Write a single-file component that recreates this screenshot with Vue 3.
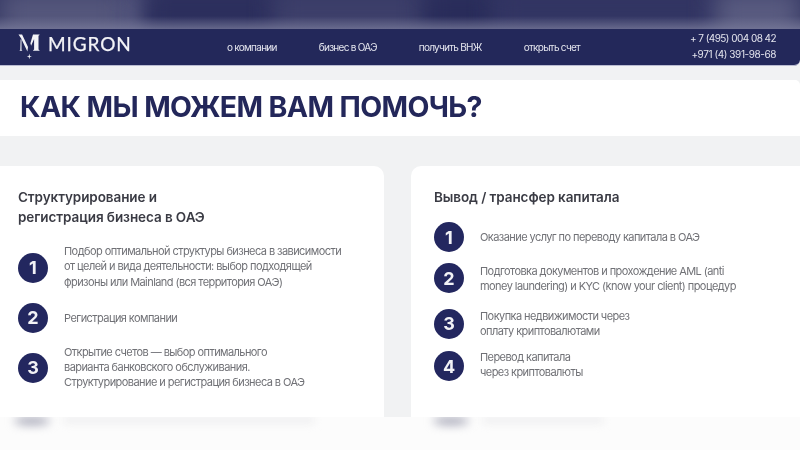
<script setup>
const nav = ['о компании', 'бизнес в ОАЭ', 'получить ВНЖ', 'открыть счет']

const leftSteps = [
  ['Подбор оптимальной структуры бизнеса в зависимости', 'от целей и вида деятельности: выбор подходящей', 'фризоны или Mainland (вся территория ОАЭ)'],
  ['Регистрация компании'],
  ['Открытие счетов — выбор оптимального', 'варианта банковского обслуживания.', 'Структурирование и регистрация бизнеса в ОАЭ']
]

const rightSteps = [
  ['Оказание услуг по переводу капитала в ОАЭ'],
  ['Подготовка документов и прохождение AML (anti', 'money laundering) и KYC (know your client) процедур'],
  ['Покупка недвижимости через', 'оплату криптовалютами'],
  ['Перевод капитала', 'через криптовалюты']
]
</script>

<template>
  <div class="page">
    <!-- размытая полоса сверху -->
    <div class="top-blur">
      <div class="smear s1"></div>
      <div class="smear s2"></div>
      <div class="smear s3"></div>
      <div class="smear s4"></div>
      <div class="smear s5"></div>
      <div class="smear s6"></div>
      <div class="smear s7"></div>
    </div>

    <header class="header">
      <div class="logo">
        <svg class="logo-mark" width="23" height="26" viewBox="0 0 23 26">
          <path d="M0.5 0.5h3.6L10 13 9.4 17.5 3.2 4.6z" fill="#f3f3f7" />
          <path d="M2.6 5.5h0.9v10.3l0.9 1h-3l0.9-1z" fill="#f3f3f7" />
          <path d="M15 0.5h6.5v0.6l-1 0.7v13.6l1 0.9v0.5h-6.4v-0.5l1-0.9V5l-3 6.8-0.7-2.6z" fill="#f3f3f7" />
          <path d="M11.3 19.8l0.6 2.1 2 0.6-2 0.6-0.6 2.1-0.6-2.1-2-0.6 2-0.6z" fill="#f3f3f7" />
        </svg>
        <span class="logo-text">MIGRON</span>
      </div>
      <nav class="nav">
        <a v-for="item in nav" :key="item" class="nav-link">{{ item }}</a>
      </nav>
      <div class="phones">
        <div class="phone-first">+ 7 (495) 004 08 42</div>
        <div>+971 (4) 391-98-68</div>
      </div>
    </header>

    <div class="title-band">
      <h1>КАК МЫ МОЖЕМ ВАМ ПОМОЧЬ?</h1>
    </div>

    <div class="cards">
      <section class="card card-left">
        <h2>Структурирование и<br />регистрация бизнеса в ОАЭ</h2>
        <div class="steps">
          <div v-for="(lines, i) in leftSteps" :key="i" class="step">
            <span class="num">{{ i + 1 }}</span>
            <p><span v-for="line in lines" :key="line" class="line">{{ line }}</span></p>
          </div>
        </div>
      </section>
      <section class="card card-right">
        <h2>Вывод / трансфер капитала</h2>
        <div class="steps">
          <div v-for="(lines, i) in rightSteps" :key="i" class="step">
            <span class="num">{{ i + 1 }}</span>
            <p><span v-for="line in lines" :key="line" class="line">{{ line }}</span></p>
          </div>
        </div>
      </section>
    </div>

    <!-- размытый низ -->
    <div class="bottom-blur">
      <div class="smudge-wrap left"><div class="smudge"></div><div class="smudge-line"></div></div>
      <div class="smudge-wrap right"><div class="smudge"></div><div class="smudge-line short"></div></div>
    </div>
  </div>
</template>

<style>
body {
  background: #f1f2f3;
}
</style>

<style scoped>
.page {
  width: 800px;
  height: 450px;
  overflow: hidden;
  display: flex;
  flex-direction: column;
  background: #f1f2f3;
  font-family: Inter, "Noto Sans", sans-serif;
  filter: blur(0.35px);
}

.top-blur {
  position: relative;
  height: 29px;
  flex: none;
  display: flex;
  overflow: hidden;
  background: #323562;
}
.top-blur::after {
  content: "";
  position: absolute;
  inset: 0;
  background: linear-gradient(rgba(110, 112, 145, 0) 55%, rgba(125, 127, 158, 0.7) 100%);
}
.smear {
  height: 50px;
  margin-top: -10px;
  filter: blur(12px);
}
.s1 { width: 125px; background: #55577c; }
.s2 { width: 20px; background: #63658a; }
.s3 { width: 130px; background: #2c2f5d; }
.s4 { width: 150px; background: #3d3f6a; }
.s5 { width: 70px; background: #292c5a; }
.s6 { width: 220px; background: #323563; }
.s7 { width: 85px; background: #595b80; }

.header {
  height: 37px;
  flex: none;
  display: flex;
  align-items: center;
  background: #23285a;
  border-bottom: 1px solid #b9bbd0;
  border-bottom-right-radius: 6px;
  box-sizing: border-box;
  padding-left: 18px;
  color: #e9eaf1;
}
.logo {
  width: 209px;
  display: flex;
  align-items: center;
  gap: 7px;
  flex: none;
}
.logo-mark {
  margin-top: -1px;
}
.logo-text {
  font-family: Lato, sans-serif;
  font-size: 19px;
  font-weight: 400;
  letter-spacing: 0.9px;
  color: #f3f3f7;
  -webkit-text-stroke: 0.25px #f3f3f7;
  margin-top: -8px;
}
.nav {
  display: flex;
  gap: 42px;
  font-size: 10px;
  letter-spacing: -0.72px;
}
.nav-link {
  color: #e4e5ee;
}
.phones {
  margin-left: auto;
  padding-right: 24px;
  font-size: 10px;
  letter-spacing: -0.42px;
  line-height: 16px;
  text-align: right;
  color: #e4e5ee;
  margin-top: -3px;
}
.phone-first {
  letter-spacing: -0.55px;
}

.title-band {
  margin-top: 14px;
  height: 56px;
  flex: none;
  display: flex;
  align-items: center;
  background: #fff;
  border-radius: 0 5px 0 0;
  padding-left: 20px;
}
h1 {
  margin: -4px 0 0;
  font-size: 28.5px;
  font-weight: 700;
  letter-spacing: -0.62px;
  color: #23275a;
}

.cards {
  margin-top: 30px;
  height: 251px;
  flex: none;
  display: flex;
  gap: 27px;
}
.card {
  background: #fff;
  box-sizing: border-box;
  padding-top: 21px;
}
.card-left {
  width: 384px;
  padding-left: 18px;
  border-radius: 0 10px 0 0;
}
.card-right {
  flex: 1;
  padding-left: 23px;
  border-radius: 10px 0 0 0;
}
h2 {
  margin: 0;
  font-size: 13.5px;
  line-height: 20px;
  font-weight: 600;
  letter-spacing: -0.08px;
  color: #3a3b44;
}
.steps {
  display: flex;
  flex-direction: column;
}
.step {
  display: flex;
  align-items: center;
  gap: 16px;
  min-height: 30px;
}
.num {
  width: 30px;
  height: 30px;
  flex: none;
  border-radius: 50%;
  background: #23275f;
  color: #f2f2f6;
  font-size: 18px;
  font-weight: 700;
  display: flex;
  align-items: center;
  justify-content: center;
}
.step p {
  margin: 0;
  font-size: 11px;
  letter-spacing: -0.57px;
  line-height: 15.3px;
  color: #707176;
  transform: translateY(1px);
}
.line {
  display: block;
}

.card-left .steps { margin-top: 16px; }
.card-left .step:nth-child(1) .num { margin-top: 4px; }
.card-left .step:nth-child(2) { margin-top: 14px; }
.card-left .step:nth-child(3) { margin-top: 11px; }
.card-left .step:nth-child(3) .num { margin-top: 2px; }

.card-right .steps { margin-top: 15px; }
.card-right .step:nth-child(2) { margin-top: 11px; }
.card-right .step:nth-child(3) { margin-top: 15px; }
.card-right .step:nth-child(3) p { transform: none; }
.card-right .step:nth-child(4) { margin-top: 12px; }
.card-right .step:nth-child(4) p { transform: translateY(-1px); }

.bottom-blur {
  height: 33px;
  flex: none;
  display: flex;
  gap: 27px;
  background: #fcfcfc;
  overflow: hidden;
}
.smudge-wrap {
  display: flex;
  align-items: flex-start;
  gap: 14px;
}
.smudge-wrap.left { width: 384px; padding-left: 14px; box-sizing: border-box; }
.smudge-wrap.right { flex: 1; padding-left: 22px; box-sizing: border-box; }
.smudge {
  width: 36px;
  height: 8px;
  flex: none;
  border-radius: 50%;
  background: #a5a6b6;
  filter: blur(5px);
}
.smudge-line {
  width: 250px;
  height: 6px;
  background: #ececee;
  filter: blur(4px);
}
.smudge-line.short {
  width: 120px;
}
</style>
